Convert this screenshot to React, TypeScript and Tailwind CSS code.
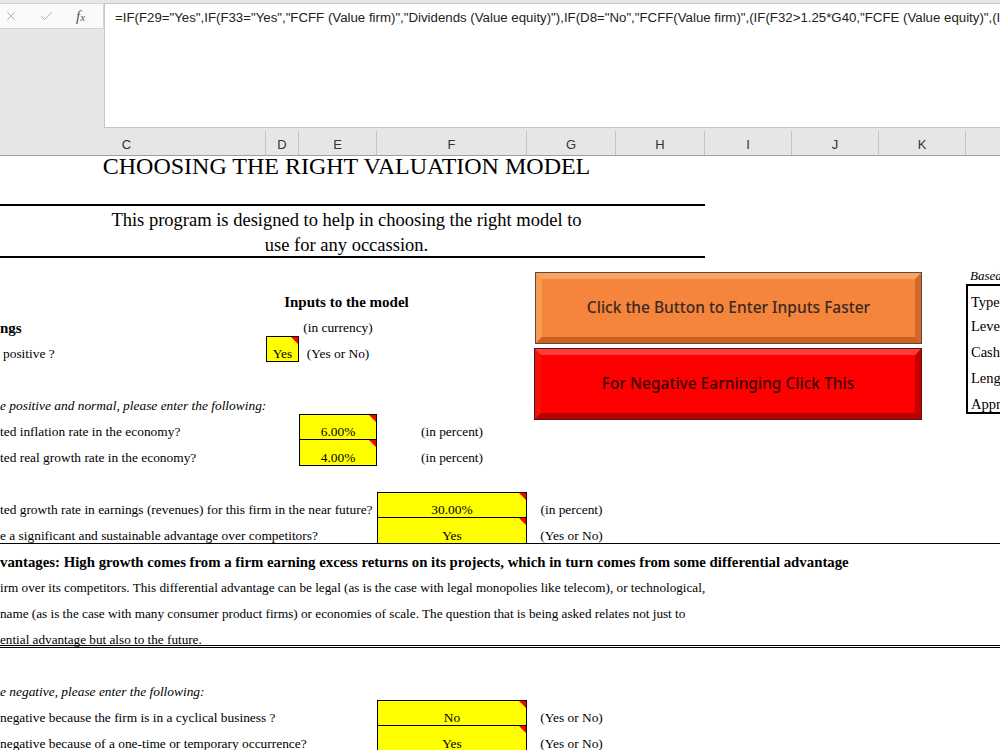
import { X, Check } from "lucide-react";
import type { ReactNode } from "react";

const headCols = [
  { label: "C", w: "w-[278px]" },
  { label: "D", w: "w-[33px]" },
  { label: "E", w: "w-[78px]" },
  { label: "F", w: "w-[150px]" },
  { label: "G", w: "w-[89px]" },
  { label: "H", w: "w-[89px]" },
  { label: "I", w: "w-[87px]" },
  { label: "J", w: "w-[87px]" },
  { label: "K", w: "w-[87px]" },
  { label: "", w: "w-[100px]" },
];

const formula =
  '=IF(F29="Yes",IF(F33="Yes","FCFF (Value firm)","Dividends (Value equity)"),IF(D8="No","FCFF(Value firm)",(IF(F32>1.25*G40,"FCFE (Value equity)",(IF(F34="Yes","FCFF (Value firm)","FCFE (Value equity)"))))))';

// one 26px spreadsheet row
function Row({ className = "", children }: { className?: string; children?: ReactNode }) {
  return <div className={`flex h-[26px] text-[13.4px] ${className}`}>{children}</div>;
}

function Cell({ w, className = "", children }: { w: string; className?: string; children?: ReactNode }) {
  return (
    <div className={`${w} shrink-0 h-full relative whitespace-nowrap pt-[10px] leading-[16px] ${className}`}>
      {children}
    </div>
  );
}

// yellow input cell with the red comment marker
function Input({ w, value, className = "" }: { w: string; value: string; className?: string }) {
  return (
    <div
      className={`${w} shrink-0 h-full relative bg-[#ffff00] border border-black text-center pt-[9px] leading-[16px] ${className}`}
    >
      {value}
      <span className="absolute top-0 right-0 w-0 h-0 border-t-[7px] border-l-[7px] border-t-[#ff0000] border-l-transparent" />
    </div>
  );
}

function TableCell({ text, className = "" }: { text: string; className?: string }) {
  return (
    <div className={`w-[60px] shrink-0 h-full border-l-2 border-black pl-[3px] pt-[8px] leading-[16px] text-[14.5px] whitespace-nowrap ${className}`}>
      {text}
    </div>
  );
}

export default function App() {
  return (
    <div className="w-[1000px] h-[750px] overflow-hidden bg-white relative">
      {/* formula bar */}
      <div className="h-[131px] bg-[#e6e6e6] flex">
        <div className="w-[104px] shrink-0 pt-[3px]">
          <div className="h-[26px] bg-[#fafafa] border-y border-r border-[#d4d4d4] flex items-center">
            <X className="ml-[4px] w-[14px] h-[14px] text-[#a8a8a8]" strokeWidth={1.5} />
            <Check className="ml-[21px] w-[15px] h-[15px] text-[#a8a8a8]" strokeWidth={1.5} />
            <span className="ml-[22px] italic font-['Liberation_Serif',serif] text-[15px] text-[#555]">
              f<span className="text-[11px]">x</span>
            </span>
          </div>
        </div>
        <div className="flex-1 mt-[3px] h-[125px] bg-white border border-r-0 border-[#c6c6c6] pl-[10px] pt-[6px] text-[13.25px] leading-[16px] text-[#222] font-['Liberation_Sans',sans-serif] whitespace-nowrap overflow-hidden">
          {formula}
        </div>
      </div>

      {/* column headers */}
      <div className="h-[25px] bg-[#e6e6e6] border-b border-[#9e9e9e] flex ml-[-12px] text-[13px] text-[#333] font-['Liberation_Sans',sans-serif]">
        {headCols.map((c, i) => (
          <div key={i} className={`${c.w} shrink-0 border-r border-[#c4c4c4] text-center pt-[6px] leading-[16px]`}>
            {c.label}
          </div>
        ))}
      </div>

      {/* sheet */}
      <div className="relative font-['Liberation_Serif','Times_New_Roman',serif] text-black">
        <div className="h-[50px] ml-[-12px] w-[717px] border-b-2 border-black text-center text-[24px] leading-[20px]">
          CHOOSING THE RIGHT VALUATION MODEL
        </div>
        <div className="h-[52px] ml-[-12px] w-[717px] border-b-2 border-black text-center text-[18.5px] leading-[25px] pt-[2px]">
          This program is designed to help in choosing the right model to
          <br />
          use for any occassion.
        </div>

        <Row>
          <div className="w-[966px] shrink-0" />
          <Cell w="w-[60px]" className="italic text-[13px] pt-[9px] pl-[4px]">
            Based on
          </Cell>
        </Row>
        <Row>
          <div className="ml-[-12px] w-[717px] shrink-0 text-center font-bold text-[15px] pt-[10px] leading-[16px]">
            Inputs to the model
          </div>
          <div className="w-[261px] shrink-0" />
          <TableCell text="Type of" className="border-t-2" />
        </Row>
        <Row>
          <Cell w="w-[266px]" className="font-bold text-[15px]">ngs</Cell>
          <Cell w="w-[33px]" />
          <Cell w="w-[78px]" className="text-center">(in currency)</Cell>
          <div className="w-[589px] shrink-0" />
          <TableCell text="Level of" />
        </Row>
        <Row>
          <Cell w="w-[266px]" className="pl-[3px]">positive ?</Cell>
          <Input w="w-[33px]" value="Yes" />
          <Cell w="w-[78px]" className="text-center">(Yes or No)</Cell>
          <div className="w-[589px] shrink-0" />
          <TableCell text="Cashflow" />
        </Row>
        <Row>
          <div className="w-[966px] shrink-0" />
          <TableCell text="Length of" />
        </Row>
        <Row>
          <Cell w="w-[266px]" className="italic">e positive and normal, please enter the following:</Cell>
          <div className="w-[700px] shrink-0" />
          <TableCell text="Approach" className="border-b-2" />
        </Row>
        <Row>
          <Cell w="w-[266px]">ted inflation rate in the economy?</Cell>
          <Cell w="w-[33px]" />
          <Input w="w-[78px]" value="6.00%" />
          <Cell w="w-[150px]" className="text-center">(in percent)</Cell>
        </Row>
        <Row>
          <Cell w="w-[266px]">ted real growth rate in the economy?</Cell>
          <Cell w="w-[33px]" />
          <Input w="w-[78px]" value="4.00%" className="border-t-0 pt-[10px]" />
          <Cell w="w-[150px]" className="text-center">(in percent)</Cell>
        </Row>
        <Row />
        <Row>
          <Cell w="w-[266px]">ted growth rate in earnings (revenues) for this firm in the near future?</Cell>
          <Cell w="w-[33px]" />
          <Cell w="w-[78px]" />
          <Input w="w-[150px]" value="30.00%" />
          <Cell w="w-[89px]" className="text-center">(in percent)</Cell>
        </Row>
        <Row className="border-b border-black">
          <Cell w="w-[266px]">e a significant and sustainable advantage over competitors?</Cell>
          <Cell w="w-[33px]" />
          <Cell w="w-[78px]" />
          <Input w="w-[150px]" value="Yes" className="border-t-0 border-b-0 pt-[10px]" />
          <Cell w="w-[89px]" className="text-center">(Yes or No)</Cell>
        </Row>
        <Row>
          <Cell w="w-[266px]" className="font-bold text-[14.8px]">
            vantages: High growth comes from a firm earning excess returns on its projects, which in turn comes from some differential advantage
          </Cell>
        </Row>
        <Row>
          <Cell w="w-[266px]" className="text-[13.2px]">
            irm over its competitors. This differential advantage can be legal (as is the case with legal monopolies like telecom), or technological,
          </Cell>
        </Row>
        <Row>
          <Cell w="w-[266px]" className="text-[13.2px]">
            name (as is the case with many consumer product firms) or economies of scale. The question that is being asked relates not just to
          </Cell>
        </Row>
        <Row className="border-b-[3px] border-double border-black">
          <Cell w="w-[266px]" className="text-[13.2px]">ential advantage but also to the future.</Cell>
        </Row>
        <Row />
        <Row>
          <Cell w="w-[266px]" className="italic">e negative, please enter the following:</Cell>
        </Row>
        <Row>
          <Cell w="w-[266px]">negative because the firm is in a cyclical business ?</Cell>
          <Cell w="w-[33px]" />
          <Cell w="w-[78px]" />
          <Input w="w-[150px]" value="No" />
          <Cell w="w-[89px]" className="text-center">(Yes or No)</Cell>
        </Row>
        <Row>
          <Cell w="w-[266px]">negative because of a one-time or temporary occurrence?</Cell>
          <Cell w="w-[33px]" />
          <Cell w="w-[78px]" />
          <Input w="w-[150px]" value="Yes" className="border-t-0 pt-[10px]" />
          <Cell w="w-[89px]" className="text-center">(Yes or No)</Cell>
        </Row>

        {/* floating macro buttons */}
        <button className="absolute left-[536px] top-[117px] w-[385px] h-[70px] bg-[#f5843c] border-[6px] border-t-[#f9a466] border-l-[#f8994f] border-r-[#d4682a] border-b-[#cc5f22] outline outline-1 outline-[#5a4a40] flex items-center justify-center text-[15.5px] text-[#3a2a20] font-['Noto_Sans',sans-serif] font-medium">
          Click the Button to Enter Inputs Faster
        </button>
        <button className="absolute left-[535px] top-[193px] w-[386px] h-[70px] bg-[#ff0000] border-[6px] border-t-[#ff3c3c] border-l-[#f41010] border-r-[#c80000] border-b-[#b80000] outline outline-1 outline-[#4a1a1a] flex items-center justify-center text-[15.5px] text-[#3a0000] font-['Noto_Sans',sans-serif] font-medium">
          For Negative Earninging Click This
        </button>
      </div>
    </div>
  );
}
